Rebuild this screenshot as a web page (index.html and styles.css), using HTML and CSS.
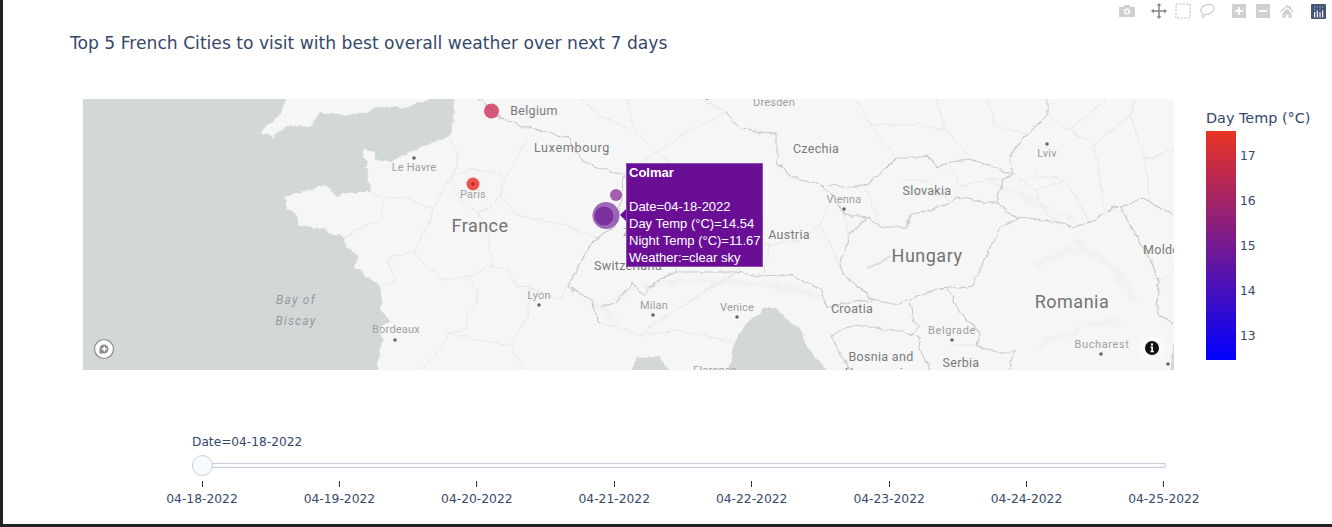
FILE: index.html
```html
<!DOCTYPE html>
<html lang="en">
<head>
<meta charset="utf-8">
<title>Top 5 French Cities</title>
<link rel="stylesheet" href="styles.css">
</head>
<body>
<div class="page">
  <div class="modebar">
    <div class="mb-group">
      <svg class="mb-icon" viewBox="0 0 16 16"><path class="ic-light" fill-rule="evenodd" d="M0 4h4l1.200-2h5.600L12 4h4v10H0zM8 5.500a3 3 0 1 0 0 6 3 3 0 0 0 0-6zM8 7a1.500 1.500 0 1 1 0 3 1.500 1.500 0 0 1 0-3z"/></svg>
    </div>
    <div class="mb-group">
      <svg class="mb-icon" viewBox="0 0 16 16"><path class="ic-dark" d="M8 0l2.500 2.800H8.800v4.400h4.400V5.500L16 8l-2.800 2.500V8.800H8.800v4.400h1.700L8 16l-2.500-2.800h1.700V8.800H2.800v1.700L0 8l2.800-2.500v1.700h4.400V2.800H5.500z"/></svg>
      <svg class="mb-icon" viewBox="0 0 16 16"><rect class="ic-dash" x="1" y="1" width="14" height="14"/></svg>
      <svg class="mb-icon" viewBox="0 0 16 16"><path class="ic-line" d="M4.500 11.500C2 10 1 7.500 2.500 5 4.500 2 9.500 .5 13 2c2.800 1.500 2.500 4.800.2 7-2 1.800-5 2.900-8.200 2.500zM4.500 11.500c-1.500.2-2 1.800-.8 2.600 1 .6 2.200 0 1.900-1.400"/></svg>
    </div>
    <div class="mb-group">
      <svg class="mb-icon" viewBox="0 0 16 16"><path class="ic-light" fill-rule="evenodd" d="M1 1h14v14H1zM7 4v3H4v2h3v3h2V9h3V7H9V4z"/></svg>
      <svg class="mb-icon" viewBox="0 0 16 16"><path class="ic-light" fill-rule="evenodd" d="M1 1h14v14H1zM4 7v2h8V7z"/></svg>
      <svg class="mb-icon" viewBox="0 0 16 16"><path class="ic-light" d="M8 2L1 8.500l1 .8L8 4l6 5.300 1-.8-3-2.700V3h-2v1.100zM3.500 10v5h3v-3.500h3V15h3v-5L8 5.800z"/></svg>
    </div>
    <div class="mb-group">
      <svg class="mb-logo" viewBox="0 0 15 15"><rect class="logo-bg" width="15" height="15" rx="1"/><path class="logo-bar" d="M3 8h1.200v5.500H3zM5.700 6.500h1.200v7H5.700zM8.400 8h1.200v5.500H8.400zM11 6.500h1.200v7H11z"/><path class="logo-dot" d="M3 2.500h1.100v1.100H3zM5.700 2.500h1.100v1.100H5.700zM8.400 2.500h1.100v1.100H8.400zM11 2.500h1.100v1.100H11zM3 5h1.100v1.100H3zM8.400 5h1.100v1.100H8.400z"/></svg>
    </div>
  </div>

  <h1 class="title">Top 5 French Cities to visit with best overall weather over next 7 days</h1>

  <div class="plot-row">
    <div class="map">
      <svg class="map-svg" viewBox="83 99 1091 271" width="1091" height="271">
        <defs>
          <filter id="rag" filterUnits="userSpaceOnUse" x="60" y="70" width="1140" height="330">
            <feTurbulence type="fractalNoise" baseFrequency="0.11" numOctaves="3" seed="4"/>
            <feDisplacementMap in="SourceGraphic" scale="6" xChannelSelector="R" yChannelSelector="G"/>
          </filter>
          <filter id="soft" filterUnits="userSpaceOnUse" x="60" y="70" width="1140" height="330">
            <feTurbulence type="fractalNoise" baseFrequency="0.09" numOctaves="2" seed="9"/>
            <feDisplacementMap in="SourceGraphic" scale="14" xChannelSelector="R" yChannelSelector="G"/>
            <feGaussianBlur stdDeviation="1.200"/>
          </filter>
        </defs>
        <rect class="land" x="83" y="99" width="1091" height="271"/>
        <g filter="url(#soft)" class="relief">
          <path d="M600 310L640 285 700 280 770 285 820 295"/>
          <path d="M590 300L620 320"/>
          <path d="M1075 240L1110 265 1135 300"/>
          <path d="M1035 265L1070 250 1100 250"/>
          <path d="M1040 345L1090 325 1120 320"/>
          <path d="M990 180L1040 205 1075 220"/>
          <path d="M905 190L940 195"/>
        </g>
        <g filter="url(#rag)">
          <path class="sea" d="M70 85H292L280 115 260 132 273 137 287 125 310 127 320 112 347 115 367 112 377 107 400 108 430 100 440 85 455 85 453 128 447 137 427 145 410 152 390 162 377 160 375 152 362 150 367 168 370 192 353 192 337 197 327 185 307 190 285 197 287 208 297 218 297 225 320 228 343 238 347 248 357 255 355 265 367 277 380 285 382 302 380 308 390 322 380 328 382 342 375 385H70z"/>
          <path class="sea" d="M626 385L637 358 660 357 679 385zM726 385L733 352 734 342 743 328 763 308 777 308 790 322 800 328 807 348 820 362 834 385z"/>
          <path class="sea" d="M1185 338L1173 345 1171 358 1171 385H1185z"/>
        </g>
        <path class="lake" d="M867 268L880 263 890 256"/>

        <g class="b-region" filter="url(#rag)">
          <path d="M450 138L457 152 457 168 450 178 457 198 477 212 490 208 500 195 503 182 497 172 470 170 450 178"/>
          <path d="M370 192L383 198 382 218 357 230 343 238"/>
          <path d="M383 198L407 197 417 203 433 208 430 222 413 252 443 280 470 277 492 265 488 228 477 212"/>
          <path d="M413 252L387 258 395 282 380 285"/>
          <path d="M470 277L478 292 475 305 467 315 468 328 450 333 433 358 420 370"/>
          <path d="M492 265L510 272 517 287 530 288 560 300 573 275"/>
          <path d="M500 195L517 215 540 220 565 225 597 238"/>
          <path d="M503 182L527 140"/>
          <path d="M433 208L450 178"/>
          <path d="M530 288L527 320 510 345 525 370"/>
          <path d="M450 333L480 340 510 345"/>
          <path d="M627 99L633 128 657 152 623 175"/>
          <path d="M627 128L600 115 580 99"/>
          <path d="M657 152L690 130 727 112"/>
          <path d="M657 152L680 172"/>
          <path d="M700 99L727 112"/>
          <path d="M763 277L770 245 800 240 820 225 833 195"/>
          <path d="M737 272L745 240 770 245"/>
          <path d="M820 225L840 265"/>
          <path d="M600 322L640 335 680 330 733 342"/>
          <path d="M640 335L660 320 690 300 737 272"/>
          <path d="M857 99L870 125 897 158"/>
          <path d="M870 125L920 125 945 130 973 160"/>
          <path d="M937 99L945 130"/>
          <path d="M987 99L995 125 1027 135"/>
          <path d="M1047 115L1070 130 1105 99"/>
          <path d="M1070 130L1095 145 1105 210"/>
          <path d="M1095 145L1130 115 1135 99"/>
          <path d="M1130 115L1145 160 1174 150"/>
          <path d="M1145 160L1150 195"/>
          <path d="M1035 175L1065 180 1035 190 1047 215 1063 223"/>
          <path d="M1065 180L1090 222"/>
          <path d="M1013 175L1035 190"/>
          <path d="M900 180L925 180 950 202"/>
          <path d="M840 205L850 235"/>
          <path d="M867 190L880 227"/>
          <path d="M950 162L960 185 1003 178"/>
          <path d="M1174 270L1158 282"/>
          <path d="M950 345L975 345"/>
        </g>
        <g class="b-country" filter="url(#rag)">
          <path d="M480 99L500 118 520 125 540 130 567 138 583 162 623 175"/>
          <path d="M597 238L590 245 573 275 568 288 590 298 593 308 600 322"/>
          <path d="M623 175L622 200 613 228 597 238"/>
          <path d="M600 308L617 302 633 282 643 295 660 278 677 272 700 272 720 272 737 272 763 277 790 275 820 288 827 308"/>
          <path d="M640 232L660 225 680 240 677 272"/>
          <path d="M727 112L740 128 777 135 777 162 793 178 820 185 833 195"/>
          <path d="M830 185L857 188 870 182 897 158 910 158 927 155 937 168 950 162 973 160 997 168 1013 175"/>
          <path d="M1013 175L1010 155 1027 135 1047 115 1047 99"/>
          <path d="M867 218L880 227 907 227 910 215 930 210 950 202 957 197 983 202 997 202 1007 212 1020 217"/>
          <path d="M997 202L1003 178 1013 175"/>
          <path d="M1020 217L1000 228 993 242 977 275 973 285 950 288 930 290"/>
          <path d="M930 290L910 300 897 305 873 300 857 285 843 275 840 265 850 235 867 218"/>
          <path d="M1020 217L1043 220 1063 223 1072 228 1090 222 1113 208 1120 207 1140 242 1153 265 1158 282 1157 312 1173 325"/>
          <path d="M1120 207L1143 198 1173 215"/>
          <path d="M947 290L960 312 980 332 977 345 997 352 1013 352 1010 370"/>
          <path d="M910 300L913 322 920 325 913 335 877 328 853 325 830 335 840 352 850 370"/>
          <path d="M917 335L923 355 930 370"/>
          <path d="M830 192L845 215 867 218"/>
          <path d="M827 308L850 302 873 300"/>
        </g>

        <text class="lbl-country" x="534" y="115">Belgium</text>
        <text class="lbl-country lbl-wide" x="572" y="152">Luxembourg</text>
        <text class="lbl-city" x="774" y="106">Dresden</text>
        <text class="lbl-country" x="816" y="153">Czechia</text>
        <text class="lbl-city" x="414" y="171">Le Havre</text>
        <text class="lbl-city" x="473" y="198">Paris</text>
        <text class="lbl-big" x="480" y="232">France</text>
        <text class="lbl-sea" x="296" y="304">Bay of</text>
        <text class="lbl-sea" x="296" y="325">Biscay</text>
        <text class="lbl-city" x="396" y="333">Bordeaux</text>
        <text class="lbl-city" x="539" y="299">Lyon</text>
        <text class="lbl-city" x="654" y="309">Milan</text>
        <text class="lbl-city" x="737" y="311">Venice</text>
        <text class="lbl-country" x="789" y="239">Austria</text>
        <text class="lbl-country" x="628" y="270">Switzerland</text>
        <text class="lbl-city" x="639" y="236">Zürich</text>
        <text class="lbl-city" x="844" y="203">Vienna</text>
        <text class="lbl-country" x="927" y="195">Slovakia</text>
        <text class="lbl-big" x="927" y="262">Hungary</text>
        <text class="lbl-city" x="1047" y="157">Lviv</text>
        <text class="lbl-country" x="1168" y="254">Moldova</text>
        <text class="lbl-big" x="1072" y="308">Romania</text>
        <text class="lbl-country" x="852" y="313">Croatia</text>
        <text class="lbl-city lbl-city-lg" x="952" y="334">Belgrade</text>
        <text class="lbl-country" x="881" y="361">Bosnia and</text>
        <text class="lbl-country" x="881" y="377">Herzegovina</text>
        <text class="lbl-country" x="961" y="367">Serbia</text>
        <text class="lbl-city lbl-city-lg" x="1102" y="348">Bucharest</text>
        <text class="lbl-city" x="715" y="374">Florence</text>

        <g class="city-dots">
          <circle cx="414" cy="158" r="1.800"/><circle cx="395" cy="340" r="1.800"/>
          <circle cx="539" cy="305" r="1.800"/><circle cx="653" cy="315" r="1.800"/>
          <circle cx="737" cy="317" r="1.800"/><circle cx="844" cy="209" r="1.800"/>
          <circle cx="1047" cy="144" r="1.800"/><circle cx="952" cy="340" r="1.800"/>
          <circle cx="1101" cy="354" r="1.800"/><circle cx="1168" cy="364" r="1.800"/>
          <circle cx="707" cy="98" r="1.800"/>
        </g>

        <circle class="m-belgium" cx="491.500" cy="111" r="7.500"/>
        <circle class="m-paris" cx="473" cy="184" r="6.500"/>
        <circle class="m-paris-core" cx="473" cy="184" r="1.800"/>
        <circle class="m-small" cx="616" cy="195" r="6"/>
        <circle class="m-colmar" cx="606" cy="215.500" r="13.500"/>
        <circle class="m-colmar-core" cx="604" cy="216" r="9.500"/>

        <circle class="attr-ring" cx="104" cy="349" r="9.500"/>
        <path class="attr-mark" d="M99.500 349a4.500 4.500 0 1 1 4.500 4.500H99.500z"/>
        <path class="attr-plus" d="M103.500 346.500h1.600v1.800h1.800v1.500h-1.800v1.800h-1.600v-1.800h-1.800v-1.500h1.800z"/>
        <circle class="info-halo" cx="1152" cy="348" r="12"/>
        <circle class="info-dot" cx="1152" cy="348" r="7"/>
        <path class="info-i" d="M1151 343.500h2v2h-2zM1150.500 346.500h2.500v4.500h1v1.200h-3.500V351h.8v-3.300h-.8z"/>
      </svg>
      <div class="tooltip">
        <span class="tip-arrow"></span>
        <b>Colmar</b><br><br>Date=04-18-2022<br>Day Temp (°C)=14.54<br>Night Temp (°C)=11.67<br>Weather:=clear sky
      </div>
    </div>
    <div class="colorbar">
      <div class="cb-title">Day Temp (°C)</div>
      <div class="cb-body">
        <div class="cb-grad"></div>
        <div class="cb-ticks">
          <span>17</span><span>16</span><span>15</span><span>14</span><span>13</span>
        </div>
      </div>
    </div>
  </div>

  <div class="slider">
    <div class="slider-label">Date=04-18-2022</div>
    <div class="rail"><span class="handle"></span></div>
    <div class="ticks">
      <div class="tick"><i></i><span>04-18-2022</span></div>
      <div class="tick"><i></i><span>04-19-2022</span></div>
      <div class="tick"><i></i><span>04-20-2022</span></div>
      <div class="tick"><i></i><span>04-21-2022</span></div>
      <div class="tick"><i></i><span>04-22-2022</span></div>
      <div class="tick"><i></i><span>04-23-2022</span></div>
      <div class="tick"><i></i><span>04-24-2022</span></div>
      <div class="tick"><i></i><span>04-25-2022</span></div>
    </div>
  </div>
</div>
</body>
</html>
```
FILE: styles.css
```css
* { box-sizing: border-box; }
html, body { margin: 0; padding: 0; background: #222; overflow: hidden; }
body { width: 1332px; height: 527px; font-family: "DejaVu Sans", Verdana, sans-serif; color: #34486a; }
.page { width: 1332px; height: 524px; border-left: 3px solid #222; background: #fff; overflow: hidden; }

.modebar { height: 22px; display: flex; justify-content: flex-end; align-items: center; gap: 16px; padding-right: 6px; }
.mb-group { display: flex; gap: 8px; align-items: center; }
.mb-icon { width: 16px; height: 16px; display: block; }
.mb-logo { width: 15px; height: 15px; display: block; }
.ic-light { fill: #d0d0d0; }
.ic-dark { fill: #8a8a8a; }
.ic-dash { fill: none; stroke: #d0d0d0; stroke-width: 1.500; stroke-dasharray: 2 1.500; }
.ic-line { fill: none; stroke: #d0d0d0; stroke-width: 1.200; }
.logo-bg { fill: #445379; }
.logo-bar { fill: #f2f4f8; }
.logo-dot { fill: #8fc6c6; }

.title { margin: 10px 0 0 67px; height: 22px; font-size: 17.150px; line-height: 22px; font-weight: 400; color: #34486a; white-space: nowrap; }

.plot-row { display: flex; margin: 45px 0 0 80px; height: 271px; }
.map { position: relative; width: 1091px; height: 271px; overflow: hidden; }
.map-svg { display: block; }
.land { fill: #f6f6f6; }
.sea { fill: #d2d8d8; }
.lake { fill: none; stroke: #d9dfdf; stroke-width: 2; }
.relief path { fill: none; stroke: #f1f1f1; stroke-width: 5; }
.b-region path { fill: none; stroke: #e4e4e4; stroke-width: .9; }
.b-country path { fill: none; stroke: #c8c8c8; stroke-width: 1.100; }
.map-svg text { font-family: Roboto, "Noto Sans", sans-serif; text-anchor: middle; }
.lbl-country { font-size: 12.500px; fill: #7a7a7a; letter-spacing: .3px; }
.lbl-wide { letter-spacing: .7px; }
.lbl-city { font-size: 11px; fill: #a0a0a0; letter-spacing: .2px; }
.lbl-city-lg { letter-spacing: .6px; }
.lbl-big { font-size: 18px; fill: #737373; letter-spacing: .5px; }
.lbl-sea { font-size: 12px; font-style: italic; fill: #999; letter-spacing: 1.200px; }
.city-dots circle { fill: #666; }
.m-belgium { fill: #d2466b; fill-opacity: .9; }
.m-paris { fill: #ee3b35; fill-opacity: .88; }
.m-paris-core { fill: #b5202a; }
.m-small { fill: #8a2a96; fill-opacity: .75; }
.m-colmar { fill: #7a2fa2; fill-opacity: .72; }
.m-colmar-core { fill: #6a1290; fill-opacity: .65; }
.attr-ring { fill: #fff; stroke: #8a8a8a; stroke-width: 1.200; }
.attr-mark { fill: #8a8a8a; }
.attr-plus { fill: #fff; }
.info-halo { fill: #fff; fill-opacity: .55; }
.info-dot { fill: #111; }
.info-i { fill: #fff; }

.tooltip { position: absolute; left: 543px; top: 64px; width: 137px; height: 104px; padding: 1px 0 0 3px; background: #6a0f95; outline: 1px solid #8b4bb0; outline-offset: -1px; color: #fff; font-family: "Liberation Sans", Arial, sans-serif; font-size: 13px; line-height: 17px; white-space: nowrap; }
.tip-arrow { position: absolute; left: -6px; top: 46px; width: 0; height: 0; border-top: 6px solid transparent; border-bottom: 6px solid transparent; border-right: 6px solid #6a0f95; }

.colorbar { margin-left: 32px; width: 126px; }
.cb-title { height: 32px; font-size: 14.400px; line-height: 38px; white-space: nowrap; }
.cb-body { display: flex; height: 229px; }
.cb-grad { width: 30px; height: 229px; background: linear-gradient(to top, #0000ff, #ea3323); }
.cb-ticks { display: flex; flex-direction: column; padding: 3px 0 0 4px; font-size: 12.300px; }
.cb-ticks span { height: 45px; line-height: 45px; }

.slider { margin: 64px 0 0 189px; width: 974px; }
.slider-label { height: 16px; font-size: 12.200px; line-height: 16px; white-space: nowrap; }
.rail { position: relative; margin-top: 13px; height: 5px; background: #f8fafc; border: 1px solid #c3cddd; border-radius: 2px; }
.handle { position: absolute; left: -1px; top: -9px; width: 21px; height: 21px; border-radius: 50%; background: #f8fafc; border: 1px solid #c3cddd; }
.ticks { display: flex; justify-content: space-between; margin-top: 13px; padding: 0 2px 0 10px; }
.tick { width: 0; display: flex; flex-direction: column; align-items: center; }
.tick i { display: block; width: 1px; height: 6px; background: #333; flex: none; }
.tick span { margin-top: 5px; font-size: 12.300px; line-height: 15px; white-space: nowrap; }
```
